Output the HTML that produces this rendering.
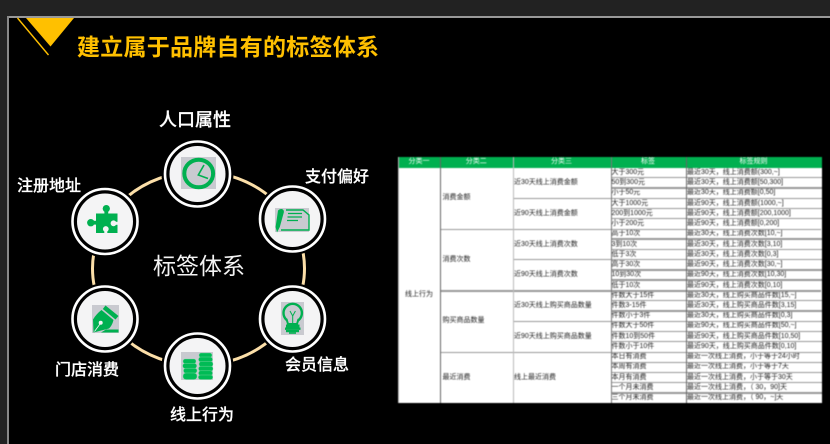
<!DOCTYPE html>
<html lang="zh">
<head>
<meta charset="utf-8">
<style>
html,body{margin:0;padding:0;background:#000}
body{width:830px;height:444px;overflow:hidden;position:relative;font-family:"Liberation Sans","Noto Sans CJK SC",sans-serif}
#top{position:absolute;left:0;top:0;width:830px;height:17px;background:#222}
#left{position:absolute;left:0;top:0;width:7px;height:444px;background:#222}
#hl{position:absolute;left:7px;top:16px;width:823px;height:2px;background:#999}
#vl{position:absolute;left:7px;top:16px;width:1.5px;height:428px;background:#888}
svg{position:absolute;left:0;top:0}
.title{position:absolute;left:77px;top:32px;font-size:23px;line-height:30px;font-weight:700;color:#ffc000;white-space:nowrap;letter-spacing:.25px}
.lb{position:absolute;color:#fff;font-size:16px;line-height:20px;font-weight:500;white-space:nowrap;transform:translate(-50%,-50%);-webkit-text-stroke:.2px #fff}
.ct{position:absolute;left:199px;top:266px;color:#f4f4f4;font-size:23px;line-height:28px;white-space:nowrap;transform:translate(-50%,-50%)}
#tb{position:absolute;left:398px;top:157px;width:423.5px;height:246px;background:#fff;overflow:hidden;filter:blur(.4px);color:#222;font-size:7px;line-height:10px}
#tb div{position:absolute;white-space:nowrap}
.h{top:0;height:10.5px;background:#00b050;color:#fff;text-align:center;line-height:10.5px;font-size:7px}
.r{left:0;width:423px;height:10.24px;top:calc(10.5px + var(--i)*10.24px)}
.c4{left:213.5px;top:.4px}
.c5{left:289px;top:.4px}
.t{height:10px}
.hr{height:1.4px;background:#999}
.vr{width:1px;top:0;height:246px}
</style>
</head>
<body>
<div id="top"></div><div id="left"></div><div id="hl"></div><div id="vl"></div>

<svg width="830" height="444" viewBox="0 0 830 444">
  <polygon points="26,18 74,18 50.5,46.5" fill="#ffc000"/>
  <line x1="17.5" y1="18" x2="48.5" y2="55" stroke="#ffc000" stroke-width="1.4"/>

  <ellipse cx="198.5" cy="268.5" rx="106" ry="97" fill="none" stroke="#fcdfa8" stroke-width="3"/>

  <g fill="#000"><circle cx="197.5" cy="174" r="36"/><circle cx="105" cy="221.5" r="36"/><circle cx="292.5" cy="219" r="36"/><circle cx="105" cy="319" r="36"/><circle cx="197.5" cy="366" r="36"/><circle cx="292.5" cy="319" r="36"/></g>
  <g fill="#f4f4f5" stroke="none"><circle cx="197.5" cy="174" r="28"/><circle cx="105" cy="221.5" r="28"/><circle cx="292.5" cy="219" r="28"/><circle cx="105" cy="319" r="28"/><circle cx="197.5" cy="366" r="28"/><circle cx="292.5" cy="319" r="28"/></g>
  <g fill="none" stroke="#fff" stroke-width="2.6"><circle cx="197.5" cy="174" r="32.5"/><circle cx="105" cy="221.5" r="32.5"/><circle cx="292.5" cy="219" r="32.5"/><circle cx="105" cy="319" r="32.5"/><circle cx="197.5" cy="366" r="32.5"/><circle cx="292.5" cy="319" r="32.5"/></g>

  <!-- clock -->
  <rect x="181" y="157" width="35" height="32" fill="#c9cad0"/>
  <ellipse cx="198.7" cy="173.5" rx="14.4" ry="13.8" fill="none" stroke="#00b050" stroke-width="4"/>
  <path d="M204 165 L198.3 175 L208 178.5" fill="none" stroke="#00b050" stroke-width="1.6"/>

  <!-- puzzle -->
  <g fill="#00b050">
    <rect x="96" y="213.5" width="21.5" height="19.5"/>
    <circle cx="106.3" cy="208.6" r="3.6"/>
    <rect x="104.4" y="210" width="3.8" height="5"/>
    <circle cx="90.8" cy="222.7" r="3.7"/>
    <rect x="92" y="220.8" width="5" height="3.8"/>
  </g>
  <g fill="#f4f4f5">
    <circle cx="113.5" cy="223.3" r="2.9"/>
    <rect x="114" y="221.8" width="4" height="3"/>
    <circle cx="105.8" cy="229" r="2.9"/>
    <rect x="104.3" y="229.5" width="3" height="4"/>
  </g>

  <!-- payment -->
  <rect x="275" y="208" width="34" height="24" fill="#c9cad0"/>
  <path d="M278 210.5 C280.5 207.8 284.5 208.8 283.8 212.5 L279.8 227 L277 232.5 L275.6 227 Z" fill="#00b050"/>
  <path d="M286 210 H303 L309 215 V230 H281" fill="none" stroke="#00b050" stroke-width="1.4"/>
  <path d="M288 213.5 H302 M287.5 217 H302 M287 220.5 H298" stroke="#00b050" stroke-width="1.2"/>

  <!-- fountain pen -->
  <rect x="92" y="305" width="27" height="28" fill="#c9cad0"/>
  <path fill="#00b050" d="M105.5 305.5 L118.5 316 L115.5 319.5 L102.8 309 Z"/>
  <path fill="#00b050" d="M101.5 310 L113.5 320 C112.5 324 111 326.5 109 328.5 L93.5 332.5 L93 319.5 C95.5 315.5 98 312.5 101.5 310 Z"/>
  <circle cx="100.7" cy="322.7" r="2" fill="#f4f4f5"/>
  <path d="M100 324 L94.5 331.5" stroke="#f4f4f5" stroke-width=".8"/>
  <path d="M106 329.5 H118.5 V332.5 H101 Z" fill="#00b050"/>

  <!-- coins -->
  <rect x="181" y="352" width="32" height="28" fill="#c9cad0"/>
  <g fill="#00bb55" stroke="#7fd8a4" stroke-width=".4">
    <rect x="199" y="353" width="13" height="4.4" rx="2.2"/>
    <rect x="198.5" y="357" width="14" height="5" rx="2.4"/>
    <rect x="199" y="361.6" width="14" height="5" rx="2.4"/>
    <rect x="198.5" y="366.2" width="14.5" height="5" rx="2.4"/>
    <rect x="198.5" y="370.8" width="14" height="4.6" rx="2.2"/>
    <rect x="198.3" y="375" width="14.5" height="4.5" rx="2.2"/>
    <rect x="183" y="359" width="13" height="4.6" rx="2.2"/>
    <rect x="182.7" y="363.4" width="14" height="5" rx="2.4"/>
    <rect x="183.5" y="368.2" width="13.5" height="5" rx="2.4"/>
    <rect x="183" y="373" width="14" height="6.5" rx="3"/>
  </g>

  <!-- bulb -->
  <rect x="281" y="302" width="23" height="33" fill="#c9cad0"/>
  <circle cx="292.7" cy="313" r="9.2" fill="#c9cad0" stroke="#00b050" stroke-width="2.4"/>
  <path d="M286.5 319 L288 324 H297 L298.5 319" fill="#c9cad0" stroke="#00b050" stroke-width="2"/>
  <path d="M290 311 L292.7 316 L295.4 311 M292.7 316 V323" fill="none" stroke="#00b050" stroke-width="1"/>
  <rect x="286" y="324.5" width="13.5" height="3" fill="#00b050"/>
  <rect x="285" y="327.5" width="15.5" height="2.4" fill="#00b050"/>
  <rect x="286" y="330" width="13" height="2.2" fill="#00b050"/>
  <rect x="289" y="332.2" width="7" height="1.6" fill="#00b050"/>
</svg>

<div class="title">建立属于品牌自有的标签体系</div>
<div class="lb" style="left:195px;top:120px;font-size:18px">人口属性</div>
<div class="lb" style="left:337px;top:178px">支付偏好</div>
<div class="lb" style="left:49px;top:187px">注册地址</div>
<div class="lb" style="left:87px;top:371px">门店消费</div>
<div class="lb" style="left:202px;top:416px">线上行为</div>
<div class="lb" style="left:317px;top:366px">会员信息</div>
<div class="ct">标签体系</div>

<div id="tb">
  <div class="h" style="left:0;width:42px">分类一</div>
  <div class="h" style="left:42px;width:72.5px">分类二</div>
  <div class="h" style="left:114.5px;width:98px">分类三</div>
  <div class="h" style="left:212.5px;width:75px">标签</div>
  <div class="h" style="left:287.5px;width:136px">标签规则</div>

  <div class="r" style="--i:0"><div class="t c4">大于300元</div><div class="t c5">最近30天，线上消费额(300,~]</div></div>
  <div class="r" style="--i:1"><div class="t c4">50到300元</div><div class="t c5">最近30天，线上消费额[50,300]</div></div>
  <div class="r" style="--i:2"><div class="t c4">小于50元</div><div class="t c5">最近30天，线上消费额[0,50]</div></div>
  <div class="r" style="--i:3"><div class="t c4">大于1000元</div><div class="t c5">最近90天，线上消费额(1000,~]</div></div>
  <div class="r" style="--i:4"><div class="t c4">200到1000元</div><div class="t c5">最近90天，线上消费额[200,1000]</div></div>
  <div class="r" style="--i:5"><div class="t c4">小于200元</div><div class="t c5">最近90天，线上消费额[0,200]</div></div>
  <div class="r" style="--i:6"><div class="t c4">高于10次</div><div class="t c5">最近30天，线上消费次数[10,~]</div></div>
  <div class="r" style="--i:7"><div class="t c4">3到10次</div><div class="t c5">最近30天，线上消费次数[3,10]</div></div>
  <div class="r" style="--i:8"><div class="t c4">低于3次</div><div class="t c5">最近30天，线上消费次数[0,3]</div></div>
  <div class="r" style="--i:9"><div class="t c4">高于30次</div><div class="t c5">最近90天，线上消费次数[30,~]</div></div>
  <div class="r" style="--i:10"><div class="t c4">10到30次</div><div class="t c5">最近90天，线上消费次数[10,30]</div></div>
  <div class="r" style="--i:11"><div class="t c4">低于10次</div><div class="t c5">最近90天，线上消费次数[0,10]</div></div>
  <div class="r" style="--i:12"><div class="t c4">件数大于15件</div><div class="t c5">最近30天，线上购买商品件数[15,~]</div></div>
  <div class="r" style="--i:13"><div class="t c4">件数3-15件</div><div class="t c5">最近30天，线上购买商品件数[3,15]</div></div>
  <div class="r" style="--i:14"><div class="t c4">件数小于3件</div><div class="t c5">最近30天，线上购买商品件数[0,3]</div></div>
  <div class="r" style="--i:15"><div class="t c4">件数大于50件</div><div class="t c5">最近90天，线上购买商品件数[50,~]</div></div>
  <div class="r" style="--i:16"><div class="t c4">件数10到50件</div><div class="t c5">最近90天，线上购买商品件数[10,50]</div></div>
  <div class="r" style="--i:17"><div class="t c4">件数小于10件</div><div class="t c5">最近90天，线上购买商品件数[0,10]</div></div>
  <div class="r" style="--i:18"><div class="t c4">本日有消费</div><div class="t c5">最近一次线上消费，小于等于24小时</div></div>
  <div class="r" style="--i:19"><div class="t c4">本周有消费</div><div class="t c5">最近一次线上消费，小于等于7天</div></div>
  <div class="r" style="--i:20"><div class="t c4">本月有消费</div><div class="t c5">最近一次线上消费，小于等于30天</div></div>
  <div class="r" style="--i:21"><div class="t c4">一个月未消费</div><div class="t c5">最近一次线上消费，（ 30，90]天</div></div>
  <div class="r" style="--i:22"><div class="t c4">三个月未消费</div><div class="t c5">最近一次线上消费，（ 90，~]天</div></div>

  <div class="t" style="left:7px;top:133px">线上行为</div>
  <div class="t" style="left:44.5px;top:36px">消费金额</div>
  <div class="t" style="left:44.5px;top:97.5px">消费次数</div>
  <div class="t" style="left:44.5px;top:159px">购买商品数量</div>
  <div class="t" style="left:44.5px;top:216px">最近消费</div>
  <div class="t" style="left:116px;top:21px">近30天线上消费金额</div>
  <div class="t" style="left:116px;top:51.5px">近90天线上消费金额</div>
  <div class="t" style="left:116px;top:82.5px">近30天线上消费次数</div>
  <div class="t" style="left:116px;top:113px">近90天线上消费次数</div>
  <div class="t" style="left:116px;top:143.7px">近30天线上购买商品数量</div>
  <div class="t" style="left:116px;top:174.7px">近90天线上购买商品数量</div>
  <div class="t" style="left:116px;top:216px">线上最近消费</div>

  <div class="hr" style="left:212.5px;width:211px;top:20px"></div>
  <div class="hr" style="left:212.5px;width:211px;top:30.2px"></div>
  <div class="hr" style="left:114.5px;width:309px;top:40.5px"></div>
  <div class="hr" style="left:212.5px;width:211px;top:50.7px"></div>
  <div class="hr" style="left:212.5px;width:211px;top:61px"></div>
  <div class="hr" style="left:42px;width:381px;top:71.5px;height:1.6px"></div>
  <div class="hr" style="left:212.5px;width:211px;top:81.4px"></div>
  <div class="hr" style="left:212.5px;width:211px;top:91.7px"></div>
  <div class="hr" style="left:114.5px;width:309px;top:102px"></div>
  <div class="hr" style="left:212.5px;width:211px;top:112.2px"></div>
  <div class="hr" style="left:212.5px;width:211px;top:122.4px"></div>
  <div class="hr" style="left:42px;width:381px;top:133px;height:1.6px"></div>
  <div class="hr" style="left:212.5px;width:211px;top:143px"></div>
  <div class="hr" style="left:212.5px;width:211px;top:153.2px"></div>
  <div class="hr" style="left:114.5px;width:309px;top:163.5px"></div>
  <div class="hr" style="left:212.5px;width:211px;top:173.7px"></div>
  <div class="hr" style="left:212.5px;width:211px;top:184px"></div>
  <div class="hr" style="left:42px;width:381px;top:194.5px;height:1.6px"></div>
  <div class="hr" style="left:212.5px;width:211px;top:204.5px"></div>
  <div class="hr" style="left:212.5px;width:211px;top:214.7px"></div>
  <div class="hr" style="left:212.5px;width:211px;top:225px"></div>
  <div class="hr" style="left:212.5px;width:211px;top:235.2px"></div>

  <div class="vr" style="left:0;background:#bbb"></div>
  <div class="vr" style="left:42px;background:#666"></div>
  <div class="vr" style="left:114.5px;background:#bbb"></div>
  <div class="vr" style="left:212.5px;background:#777"></div>
  <div class="vr" style="left:287.5px;background:#666"></div>
</div>
</body>
</html>
